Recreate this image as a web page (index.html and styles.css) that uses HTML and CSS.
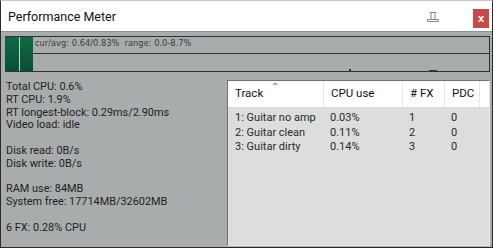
FILE: index.html
```html
<!DOCTYPE html>
<html>
<head>
    <title>Performance Meter</title>
    <link rel="stylesheet" href="styles.css">
</head>
<body>
    <div class="window">
        <div class="titlebar">
            <span class="title">Performance Meter</span>
            <svg class="pin" width="14" height="12" viewBox="0 0 14 12">
                <path d="M3.5 1.5h7M5 1.5v7M9 1.5v7M1.5 8.5h11M1.5 8.5v2h11v-2" fill="none" stroke="#888" stroke-width="1"/>
            </svg>
            <div class="close">x</div>
        </div>
        <div class="body">
            <div class="graph">
                <div class="graph-bar"><div class="graph-cursor"></div></div>
                <div class="graph-area">
                    <div class="graph-top">cur/avg: 0.64/0.83%&nbsp;&nbsp;range: 0.0-8.7%</div>
                    <div class="graph-bottom">
                        <span class="tick tick-a"></span>
                        <span class="tick tick-b"></span>
                    </div>
                </div>
            </div>
            <div class="content">
                <div class="stats">
                    <div class="group">
                        <div>Total CPU: 0.6%</div>
                        <div>RT CPU: 1.9%</div>
                        <div>RT longest-block: 0.29ms/2.90ms</div>
                        <div>Video load: idle</div>
                    </div>
                    <div class="group">
                        <div>Disk read: 0B/s</div>
                        <div>Disk write: 0B/s</div>
                    </div>
                    <div class="group">
                        <div>RAM use: 84MB</div>
                        <div>System free: 17714MB/32602MB</div>
                    </div>
                    <div class="group">
                        <div>6 FX: 0.28% CPU</div>
                    </div>
                </div>
                <div class="tracks">
                    <div class="row head">
                        <div class="c-track">Track<span class="sort">&#8963;</span></div>
                        <div class="c-cpu">CPU use</div>
                        <div class="c-fx"># FX</div>
                        <div class="c-pdc">PDC</div>
                    </div>
                    <div class="rows">
                        <div class="row">
                            <div class="c-track">1: Guitar no amp</div>
                            <div class="c-cpu">0.03%</div>
                            <div class="c-fx">1</div>
                            <div class="c-pdc">0</div>
                        </div>
                        <div class="row">
                            <div class="c-track">2: Guitar clean</div>
                            <div class="c-cpu">0.11%</div>
                            <div class="c-fx">2</div>
                            <div class="c-pdc">0</div>
                        </div>
                        <div class="row">
                            <div class="c-track">3: Guitar dirty</div>
                            <div class="c-cpu">0.14%</div>
                            <div class="c-fx">3</div>
                            <div class="c-pdc">0</div>
                        </div>
                    </div>
                </div>
            </div>
        </div>
    </div>
</body>
</html>
```

FILE: styles.css
```css
body {
    margin: 0;
    font-family: Roboto, "Liberation Sans", sans-serif;
    color: #1e1e1e;
}

.window {
    width: 493px;
    height: 248px;
    box-sizing: border-box;
    border: 1px solid #2a2a2a;
    border-top-color: #c8c8c8;
    display: flex;
    flex-direction: column;
    background-color: #a9acac;
    overflow: hidden;
}

.titlebar {
    height: 30px;
    flex-shrink: 0;
    background-color: #fff;
    display: flex;
    align-items: center;
    padding-left: 7px;
    border-bottom: 1px solid #8f9292;
}

.title {
    font-size: 12.5px;
    color: #111;
    flex: 1;
}

.pin {
    margin-right: 33px;
    margin-top: 2px;
}

.close {
    width: 16px;
    height: 19px;
    background-color: #c74a4a;
    color: #fff;
    font-family: "Liberation Sans", sans-serif;
    font-size: 11px;
    font-weight: bold;
    display: flex;
    justify-content: center;
    align-items: center;
    margin-right: 3px;
    margin-top: 4px;
}

.body {
    flex: 1;
    min-height: 0;
    display: flex;
    flex-direction: column;
    padding: 4px 2px 1px 4px;
}

.graph {
    display: flex;
    flex-shrink: 0;
    height: 34px;
    border: 1px solid #2f3232;
    border-left: none;
}

.graph-bar {
    width: 28px;
    background: linear-gradient(#0e6a42, #0a4e3a);
    position: relative;
}

.graph-cursor {
    position: absolute;
    left: 14px;
    top: 0;
    bottom: 0;
    width: 1px;
    background-color: #b8d8c8;
}

.graph-area {
    flex: 1;
    display: flex;
    flex-direction: column;
}

.graph-top {
    height: 17px;
    border-bottom: 1px solid #2f3232;
    font-family: "DejaVu Sans", sans-serif;
    font-size: 8.3px;
    color: #3c3c3c;
    padding: 1px 0 0 2px;
    box-sizing: border-box;
}

.graph-bottom {
    flex: 1;
    position: relative;
}

.tick {
    position: absolute;
    bottom: 0;
    height: 2px;
    background-color: #333;
}

.tick-a {
    left: 316px;
    width: 2px;
}

.tick-b {
    left: 396px;
    width: 8px;
    height: 1px;
}

.content {
    flex: 1;
    min-height: 0;
    display: flex;
    padding-top: 8px;
}

.stats {
    width: 221px;
    font-size: 10.9px;
    line-height: 12.8px;
    padding-top: 1px;
    padding-left: 1px;
}

.group {
    margin-bottom: 12.8px;
}

.group:last-child {
    margin-bottom: 0;
}

.tracks {
    flex: 1;
    align-self: stretch;
    background-color: #dcdddd;
    border: 1px solid #6f7272;
    border-right-color: #e8e8e8;
    border-bottom-color: #e8e8e8;
    font-size: 11px;
}

.row {
    display: flex;
    height: 14.5px;
    line-height: 14.5px;
    padding-left: 7px;
}

.head {
    height: 26px;
    line-height: 25px;
    background-color: #fff;
    color: #111;
    font-size: 11.5px;
}

.head > div {
    border-right: 1px solid #e6e6e6;
}

.rows {
    padding-top: 4px;
    color: #2a2a2a;
}

.c-track {
    width: 88px;
    position: relative;
}

.c-cpu {
    width: 79px;
    padding-left: 7px;
    box-sizing: border-box;
}

.c-fx {
    width: 42px;
    padding-left: 7px;
    box-sizing: border-box;
}

.c-pdc {
    width: 35px;
    padding-left: 7px;
    box-sizing: border-box;
}

.sort {
    position: absolute;
    left: 36px;
    top: -7px;
    font-size: 10px;
    color: #666;
}
```
